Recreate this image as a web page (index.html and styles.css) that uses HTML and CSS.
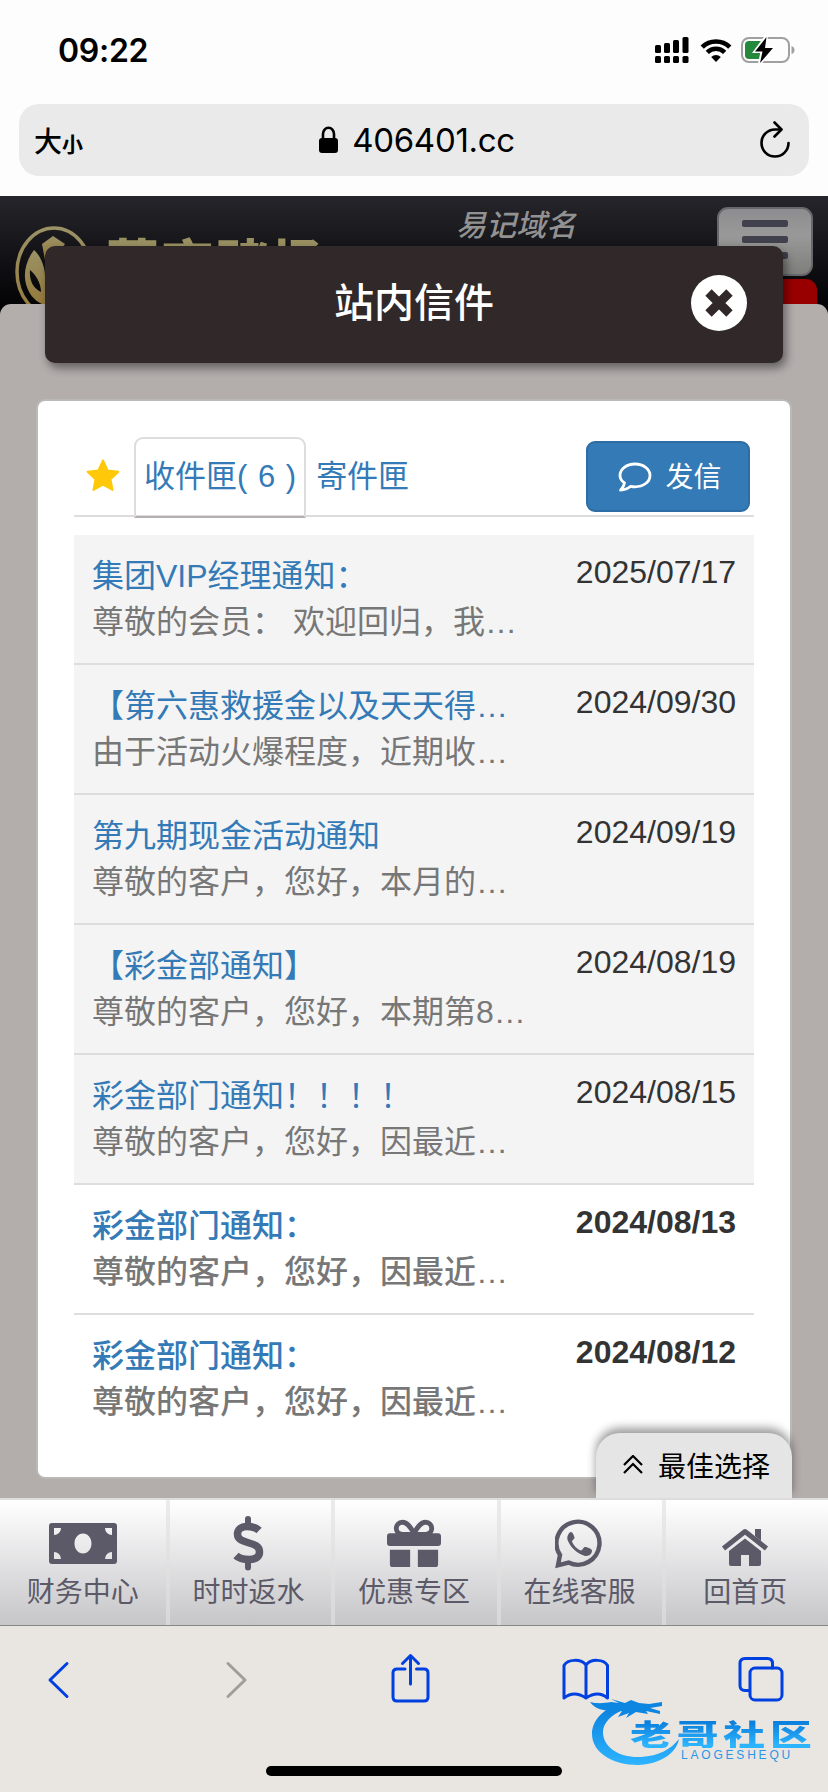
FILE: index.html
```
<!DOCTYPE html>
<html lang="zh-CN">
<head>
  <meta charset="utf-8">
  <meta name="viewport" content="width=device-width, initial-scale=1.0">
  <title>站内信件</title>
  <link rel="stylesheet" href="styles.css">
</head>
<body>
  <!-- Status bar -->
  <div class="status-bar">
    <span class="clock">09:22</span>
    <div class="status-icons">
      <svg class="signal" width="34" height="26" viewBox="0 0 34 26">
        <rect x="0" y="8" width="6" height="8" rx="1.5"/>
        <rect x="9" y="6" width="6" height="10" rx="1.5"/>
        <rect x="18" y="3" width="6" height="13" rx="1.5"/>
        <rect x="27.500" y="0" width="6" height="16" rx="1.5"/>
        <rect x="0" y="19" width="6" height="7" rx="1.5"/>
        <rect x="9" y="19" width="6" height="7" rx="1.5"/>
        <rect x="18" y="19" width="6" height="7" rx="1.5"/>
        <rect x="27.500" y="19" width="6" height="7" rx="1.5"/>
      </svg>
      <svg class="wifi" width="32" height="24" viewBox="0 0 32 24">
        <path d="M2.200 9.200a19.500 19.500 0 0 1 27.600 0M7.300 14.400a12.300 12.300 0 0 1 17.400 0" fill="none" stroke="#000" stroke-width="4.600"/>
        <path d="M16 24l-4.800-5a6.800 6.800 0 0 1 9.600 0z"/>
      </svg>
      <svg class="battery" width="54" height="28" viewBox="0 0 54 28">
        <rect x="1" y="2" width="47" height="24" rx="7" fill="none" stroke="#a0a0a0" stroke-width="2"/>
        <path d="M50.500 10v8q3-1 3-4t-3-4z" fill="#a0a0a0"/>
        <path d="M8 5h13v18H8a4 4 0 0 1-4-4V9a4 4 0 0 1 4-4z" fill="#24893c"/>
        <path d="M25.500 0L14 15.500h7L18.500 28 32 12h-8z" fill="#fff" stroke="#fff" stroke-width="3"/>
        <path d="M25.500 1L14 15.500h7.500L19 27 32 12h-8z"/>
      </svg>
    </div>
  </div>

  <!-- Address bar -->
  <div class="address-row">
    <div class="address-bar">
      <span class="text-size">大<small>小</small></span>
      <div class="domain">
        <svg width="19" height="28" viewBox="0 0 19 28">
          <rect x="0" y="12" width="19" height="15" rx="3"/>
          <path d="M4 13V8a5.500 6.300 0 0 1 11 0v5" fill="none" stroke="#000" stroke-width="2.600"/>
        </svg>
        <span>406401.cc</span>
      </div>
      <svg class="reload" width="32" height="38" viewBox="0 0 32 38">
        <path d="M29.500 22A13.500 13.500 0 1 1 16 8.500h6" fill="none" stroke="#000" stroke-width="2.600" stroke-linecap="round"/>
        <path d="M15.500 1.500l7 7-7 7" fill="none" stroke="#000" stroke-width="2.600" stroke-linecap="round" stroke-linejoin="round"/>
      </svg>
    </div>
  </div>

  <!-- Web page -->
  <div class="page">
    <div class="site-header">
      <svg class="logo-mark" width="80" height="92" viewBox="0 0 80 92">
        <defs>
          <linearGradient id="gold" x1="0" y1="0" x2="0" y2="1">
            <stop offset="0" stop-color="#9b9266"/>
            <stop offset="1" stop-color="#94793b"/>
          </linearGradient>
        </defs>
        <ellipse cx="39" cy="46" rx="37" ry="44" fill="none" stroke="url(#gold)" stroke-width="3.500"/>
        <path d="M27 18l11-8 12 8-6 8-8 2-6 6z" fill="url(#gold)"/>
        <path d="M19 24c-8 10-11 24-8 34 3 12 12 21 24 22l-5-30c0-10-5-21-11-26zM15 44c6 5 11 13 11 22-8-4-12-12-11-22z" fill="url(#gold)" fill-rule="evenodd"/>
      </svg>
      <span class="logo-text">葡京赌场</span>
      <span class="easy-domain">易记域名</span>
      <div class="menu-button"><i></i><i></i><i></i></div>
      <div class="red-tag"></div>
    </div>
    <div class="page-body"></div>

    <div class="modal">
      <div class="modal-header">
        <h1>站内信件</h1>
        <svg class="close" width="56" height="56" viewBox="0 0 56 56">
          <circle cx="28" cy="28" r="28" fill="#fff"/>
          <path d="M17.500 17.500l21 21M38.500 17.500l-21 21" stroke="#312929" stroke-width="9" />
        </svg>
      </div>

      <div class="panel">
        <div class="tabs">
          <svg class="star" width="34" height="33" viewBox="0 0 34 33">
            <path d="M17 1.500l4.600 9.900 10.800 1.300-7.900 7.500 2 10.700L17 25.700l-9.500 5.200 2-10.700-7.900-7.500 10.800-1.300z" fill="#ffc90a" stroke="#ffc90a" stroke-width="2" stroke-linejoin="round"/>
          </svg>
          <a class="tab active">收件匣( 6 )</a>
          <a class="tab">寄件匣</a>
          <a class="send-button">
            <svg width="34" height="30" viewBox="0 0 34 30">
              <path d="M6.500 20.800C3.500 18.800 2 16.300 2 13.400 2 7 8.500 2 17 2s15 5 15 11.400-6.500 11.400-15 11.400c-1.500 0-3-.2-4.300-.5C9.500 27 6.500 28 2.500 28.200c2.500-2.400 3.600-4.600 4-7.400z" fill="none" stroke="#fff" stroke-width="2.800" stroke-linejoin="round"/>
            </svg>
            <span>发信</span>
          </a>
        </div>

        <div class="mail-list">
          <div class="mail read">
            <div class="mail-text"><a>集团VIP经理通知：</a><p>尊敬的会员： 欢迎回归，我…</p></div>
            <span class="date">2025/07/17</span>
          </div>
          <div class="mail read">
            <div class="mail-text"><a>【第六惠救援金以及天天得…</a><p>由于活动火爆程度，近期收…</p></div>
            <span class="date">2024/09/30</span>
          </div>
          <div class="mail read">
            <div class="mail-text"><a>第九期现金活动通知</a><p>尊敬的客户，您好，本月的…</p></div>
            <span class="date">2024/09/19</span>
          </div>
          <div class="mail read">
            <div class="mail-text"><a>【彩金部通知】</a><p>尊敬的客户，您好，本期第8…</p></div>
            <span class="date">2024/08/19</span>
          </div>
          <div class="mail read">
            <div class="mail-text"><a>彩金部门通知！！！！</a><p>尊敬的客户，您好，因最近…</p></div>
            <span class="date">2024/08/15</span>
          </div>
          <div class="mail">
            <div class="mail-text"><a>彩金部门通知：</a><p>尊敬的客户，您好，因最近…</p></div>
            <span class="date">2024/08/13</span>
          </div>
          <div class="mail">
            <div class="mail-text"><a>彩金部门通知：</a><p>尊敬的客户，您好，因最近…</p></div>
            <span class="date">2024/08/12</span>
          </div>
        </div>
      </div>
    </div>

    <div class="best-choice">
      <svg width="20" height="19" viewBox="0 0 20 19">
        <path d="M1 10l9-9 9 9M1 18l9-9 9 9" fill="none" stroke="#000" stroke-width="2.200"/>
      </svg>
      <span>最佳选择</span>
    </div>
  </div>

  <!-- Site navigation -->
  <div class="site-nav">
    <a>
      <svg width="68" height="56" viewBox="0 0 68 56">
        <path fill-rule="evenodd" d="M3 8h62a3 3 0 0 1 3 3v35a3 3 0 0 1-3 3H3a3 3 0 0 1-3-3V11a3 3 0 0 1 3-3zM5 13v7a7 7 0 0 0 7-7zM63 13h-7a7 7 0 0 0 7 7zM5 44h7a7 7 0 0 0-7-7zM63 44v-7a7 7 0 0 0-7 7zM34 18.500c-5 0-8.500 4.500-8.500 10s3.500 10 8.500 10 8.500-4.500 8.500-10-3.500-10-8.500-10z"/>
      </svg>
      <span>财务中心</span>
    </a>
    <a>
      <svg width="34" height="56" viewBox="0 0 34 56">
        <path d="M17 4v8M17 45v7.500" fill="none" stroke="#5c5a68" stroke-width="6" stroke-linecap="round"/>
        <path d="M28 15.500c-3.500-3.500-7-4-12-4-6 0-9.500 3-9.500 7.500 0 11.500 22 6 22 18 0 5.500-4.500 7.500-10.500 7.500-6 0-10-1-13-4" fill="none" stroke="#5c5a68" stroke-width="7.500"/>
      </svg>
      <span>时时返水</span>
    </a>
    <a>
      <svg width="54" height="56" viewBox="0 0 56 56">
        <path d="M3 18h50a3 3 0 0 1 3 3v7a3 3 0 0 1-3 3H3a3 3 0 0 1-3-3v-7a3 3 0 0 1 3-3zM3 35h21v18H6a3 3 0 0 1-3-3zM32 35h21v15a3 3 0 0 1-3 3H32z"/>
        <path d="M25 19H16c-9 0-8-12.500 0-12.500 6 0 9 6.500 12 11.500 3-5 6-11.500 12-11.500 8 0 9 12.500 0 12.500h-9" fill="none" stroke="#5c5a68" stroke-width="5"/>
      </svg>
      <span>优惠专区</span>
    </a>
    <a>
      <svg width="50" height="56" viewBox="0 0 50 56">
        <path d="M5 40a21.500 21.500 0 1 1 8.500 7.500L3 50.300z" fill="none" stroke="#5c5a68" stroke-width="4.400"/>
        <path d="M15.500 17c-3 2-4 6-2.500 9 3.500 7.500 9 12.500 16.500 14.800 4 .8 7.500-1.300 7.500-5.300 0-2-6.500-4-7.500-3.500-1.500.8-2 3.500-3.500 3.500-3.500-1-7.500-5-9-9 0-1.500 3-2.500 2.500-4-.5-2.500-2-6-4-5.500z"/>
      </svg>
      <span>在线客服</span>
    </a>
    <a>
      <svg width="48" height="56" viewBox="0 0 48 56">
        <path d="M34 14h6v12l-6-5z"/>
        <path d="M2.500 33.500L24 16.500l21.500 17" fill="none" stroke="#5c5a68" stroke-width="5" stroke-linejoin="round"/>
        <path d="M24 23.500l16 12.500V49a2 2 0 0 1-2 2H28V40h-8v11H10a2 2 0 0 1-2-2V36z"/>
      </svg>
      <span>回首页</span>
    </a>
  </div>

  <!-- Browser toolbar -->
  <div class="toolbar">
    <svg class="back" width="24" height="48" viewBox="0 0 24 48"><path d="M21 7.500L4 24l17 16.500"/></svg>
    <svg class="forward" width="24" height="48" viewBox="0 0 24 48"><path d="M3 7.500L20 24 3 40.500"/></svg>
    <svg class="share" width="40" height="50" viewBox="0 0 40 50"><path d="M14 16H6q-4 0-4 4v24q0 4 4 4h27q4 0 4-4V20q0-4-4-4h-7.500M19.500 31V2.500M11.500 10.500l8-8 8 8"/></svg>
    <svg class="bookmarks" width="48" height="42" viewBox="0 0 48 42"><path d="M24 7C19 0.500 5.500 1 2 7.500V40q10-8 22 0 12-8 21.500 0V7.500C42 1 29 .5 24 7zV40"/></svg>
    <svg class="windows" width="46" height="46" viewBox="0 0 46 46"><path d="M11.500 34.500H7q-5 0-5-5V7.500q0-5 5-5h22.500q5 0 5 5V12"/><rect x="12" y="12" width="32" height="32" rx="5"/></svg>
    <div class="watermark">
      <svg width="96" height="76" viewBox="0 0 96 76">
        <defs>
          <linearGradient id="blue" x1="0" y1="0" x2="0" y2="1">
            <stop offset="0" stop-color="#0a7fdd"/>
            <stop offset="1" stop-color="#2db4ff"/>
          </linearGradient>
        </defs>
        <path d="M27 13C12 18 2 29 2 42c0 18 20 31 46 31 22-1 38-11 41-26-8 10-20 17-38 18-22 1-38-10-38-25 0-9 8-17 20-22z" fill="url(#blue)"/>
        <path d="M0 10c8 2 15 1 21 0l8 1-8-4 14 4 6-3 8 3 10 1 13-2v4l-12 2 10 3v3l-14-3 2 3-12-2-10 6 3-5-11 4 4-6c-14 1-27-1-32-9z" fill="#0d86e2"/>
      </svg>
      <span class="watermark-name">老哥社区</span>
      <span class="watermark-latin">LAOGESHEQU</span>
    </div>
    <div class="home-indicator"></div>
  </div>
</body>
</html>
```

FILE: styles.css
```
* {
  box-sizing: border-box;
}

body {
  margin: 0;
  width: 828px;
  height: 1792px;
  overflow: hidden;
  display: flex;
  flex-direction: column;
  background-color: #fdfdfd;
  font-family: "Liberation Sans", "Noto Sans CJK SC", sans-serif;
  font-size: 32px;
  color: #333;
}

svg {
  display: block;
  flex-shrink: 0;
}

/* Status bar */
.status-bar {
  height: 104px;
  padding: 0 33px 4px 58px;
  display: flex;
  justify-content: space-between;
  align-items: center;
}

.clock {
  font-family: Inter, sans-serif;
  font-weight: 600;
  font-size: 32px;
  letter-spacing: -0.3px;
  color: #000;
}

.status-icons {
  display: flex;
  align-items: center;
  gap: 11px;
}

.battery {
  margin-left: -2px;
}

/* Address bar */
.address-row {
  height: 92px;
  padding: 0 19px;
}

.address-bar {
  height: 72px;
  padding: 0 18px 0 15px;
  border-radius: 20px;
  background-color: #eaeaea;
  display: flex;
  justify-content: space-between;
  align-items: center;
  color: #000;
}

.text-size {
  font-family: "Noto Sans CJK SC", sans-serif;
  font-size: 28px;
  font-weight: 500;
}

.text-size small {
  font-size: 21px;
  font-weight: 700;
}

.domain {
  display: flex;
  align-items: center;
  gap: 14px;
  margin-left: -8px;
  font-family: Inter, sans-serif;
  font-size: 33px;
  letter-spacing: -0.3px;
}

/* Web page */
.page {
  position: relative;
  height: 1302px;
  background-color: #040406;
}

.site-header {
  position: relative;
  height: 108px;
  background: linear-gradient(#25252b, #040406);
  overflow: hidden;
}

.logo-mark {
  position: absolute;
  left: 15px;
  top: 30px;
}

.logo-text {
  position: absolute;
  left: 106px;
  top: 35px;
  font-family: "Noto Sans CJK SC", sans-serif;
  font-size: 53px;
  line-height: 60px;
  font-weight: 900;
  letter-spacing: 2px;
  color: #989060;
}

.easy-domain {
  position: absolute;
  left: 456px;
  top: 8px;
  font-size: 30px;
  line-height: 44px;
  font-weight: 500;
  font-style: italic;
  color: #929292;
}

.menu-button {
  position: absolute;
  left: 717px;
  top: 11px;
  width: 96px;
  height: 69px;
  padding: 11px 23px;
  border: 2px solid #68686c;
  border-radius: 11px;
  background: linear-gradient(#8d8d8f, #999 40%, #7e7e7b);
  display: flex;
  flex-direction: column;
  gap: 9px;
}

.menu-button i {
  height: 7px;
  border-radius: 2px;
  background-color: #41414d;
}

.red-tag {
  position: absolute;
  left: 700px;
  top: 83px;
  width: 117px;
  height: 40px;
  border-radius: 11px;
  background-color: #980000;
}

.page-body {
  height: 1194px;
  border-radius: 11px 11px 0 0;
  background-color: #b3adac;
}

/* Message window */
.modal {
  position: absolute;
  left: 0;
  right: 0;
  top: 50px;
  padding: 0 36px;
}

.modal-header {
  height: 117px;
  margin: 0 9px;
  padding: 0 36px 3px 0;
  border-radius: 10px;
  background-color: #312929;
  box-shadow: 3px 5px 10px rgba(0, 0, 0, 0.45);
  display: flex;
  align-items: center;
}

.modal-header h1 {
  flex: 1;
  margin: 0;
  padding-left: 92px;
  text-align: center;
  font-size: 40px;
  font-weight: 500;
  line-height: 60px;
  color: #fff;
}

.panel {
  height: 1080px;
  margin-top: 36px;
  padding: 36px 36px 0;
  border: 2px solid #b9b9b6;
  border-radius: 9px;
  background-color: #fff;
}

.tabs {
  height: 80px;
  padding-left: 12px;
  border-bottom: 2px solid #ddd;
  display: flex;
}

.star {
  margin-top: 22px;
  margin-right: 14px;
}

.tab {
  height: 80px;
  padding: 0 8px;
  border: 2px solid transparent;
  font-size: 31px;
  line-height: 75px;
  word-spacing: 2px;
  white-space: nowrap;
  color: #337ab7;
}

.tab.active {
  height: 81px;
  border-color: #ddd;
  border-bottom-color: #b5afaf;
  border-radius: 9px 9px 0 0;
}

.send-button {
  width: 164px;
  height: 71px;
  margin: 4px 4px 0 auto;
  padding-left: 4px;
  border: 2px solid #2e6da4;
  border-radius: 9px;
  background-color: #337ab7;
  color: #fff;
  font-size: 28px;
  display: flex;
  align-items: center;
  justify-content: center;
  gap: 13px;
}

.send-button span {
  margin-top: -3px;
}

/* Message list */
.mail-list {
  margin-top: 18px;
}

.mail {
  height: 130px;
  padding: 14px 18px 0;
  border-bottom: 2px solid #ddd;
  line-height: 46px;
  font-weight: bold;
  display: flex;
  justify-content: space-between;
}

.mail:last-child {
  border-bottom: none;
}

.mail.read {
  background-color: #f4f4f4;
  font-weight: normal;
}

.mail-text {
  padding-top: 4px;
  font-weight: 500;
  white-space: nowrap;
}

.mail.read .mail-text {
  font-weight: normal;
}

.mail-text a {
  display: block;
  color: #337ab7;
}

.mail-text p {
  margin: 0;
  line-height: 47px;
  color: #777;
}

/* Floating tab over the navigation */
.best-choice {
  position: absolute;
  left: 596px;
  bottom: 0;
  width: 196px;
  height: 65px;
  padding: 0 0 2px 27px;
  border-radius: 24px 24px 0 0;
  background-color: #e5e5e5;
  box-shadow: 0 -5px 10px rgba(0, 0, 0, 0.4);
  display: flex;
  align-items: center;
  gap: 15px;
  font-size: 28px;
  color: #000;
}

/* Site navigation */
.site-nav {
  position: relative;
  height: 128px;
  border-top: 2px solid #ddd;
  border-bottom: 1px solid #888;
  background: linear-gradient(#fff, #c6c6c9);
  display: grid;
  grid-template-columns: repeat(5, 1fr);
}

.site-nav a {
  position: relative;
  padding-top: 15px;
  display: flex;
  flex-direction: column;
  align-items: center;
  gap: 2px;
  font-size: 28px;
  line-height: 40px;
  color: #5c5a68;
}

/* divider between the items */
.site-nav a:not(:last-child)::after {
  content: "";
  position: absolute;
  top: 0;
  bottom: 0;
  right: -4px;
  width: 4px;
  background-color: rgba(225, 225, 225, 0.65);
}

.site-nav svg {
  fill: #5c5a68;
}

/* Browser toolbar */
.toolbar {
  position: relative;
  height: 166px;
  padding: 28px 43px 0 46px;
  background-color: #e9e5e1;
  display: flex;
  align-items: flex-start;
}

.toolbar > svg {
  fill: none;
  stroke: #0040e0;
  stroke-width: 3;
  stroke-linecap: round;
  stroke-linejoin: round;
}

.toolbar > .back {
  margin-top: 2px;
}

.toolbar > .forward {
  margin: 2px 0 0 155px;
  stroke: #a19d99;
}

.toolbar > .share {
  margin: -1px 0 0 142px;
}

.toolbar > .bookmarks {
  margin: 4px 0 0 131px;
}

.toolbar > .windows {
  margin: 2px 0 0 128px;
}

.home-indicator {
  position: absolute;
  left: 266px;
  bottom: 16px;
  width: 296px;
  height: 10px;
  border-radius: 5px;
  background-color: #000;
}

.watermark {
  position: absolute;
  left: 590px;
  top: 66px;
  width: 226px;
  height: 80px;
}

.watermark-name {
  position: absolute;
  left: 40px;
  top: 27px;
  font-family: "Noto Sans CJK SC", sans-serif;
  font-size: 29px;
  line-height: 29px;
  font-weight: 900;
  letter-spacing: 3.4px;
  white-space: nowrap;
  transform: scaleX(1.44);
  transform-origin: left;
  background: linear-gradient(#0a7fdd 10%, #2db4ff 90%);
  -webkit-background-clip: text;
  background-clip: text;
  color: transparent;
}

.watermark-latin {
  position: absolute;
  left: 91px;
  top: 57px;
  font-size: 12px;
  line-height: 12px;
  letter-spacing: 2.8px;
  color: #2a96e8;
}
```
